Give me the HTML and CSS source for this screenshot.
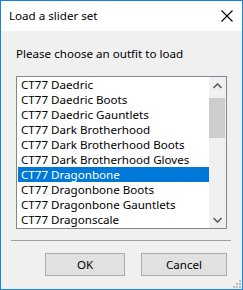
FILE: index.html
```html
<!DOCTYPE html>
<html>
<head>
<meta charset="utf-8">
<link rel="stylesheet" href="styles.css">
</head>
<body>
<div class="window">
  <div class="titlebar">
    <span class="title">Load a slider set</span>
    <svg class="close" width="12" height="12" viewBox="0 0 12 12"><path d="M0.5 0.5 L11.5 11.5 M11.5 0.5 L0.5 11.5" stroke="#000" stroke-width="1.1" fill="none"/></svg>
  </div>
  <div class="content">
    <div class="label">Please choose an outfit to load</div>
    <div class="listbox">
      <ul class="items">
        <li>CT77 Daedric</li>
        <li>CT77 Daedric Boots</li>
        <li>CT77 Daedric Gauntlets</li>
        <li>CT77 Dark Brotherhood</li>
        <li>CT77 Dark Brotherhood Boots</li>
        <li>CT77 Dark Brotherhood Gloves</li>
        <li class="selected">CT77 Dragonbone</li>
        <li>CT77 Dragonbone Boots</li>
        <li>CT77 Dragonbone Gauntlets</li>
        <li>CT77 Dragonscale</li>
      </ul>
      <div class="scrollbar">
        <div class="arrow"><svg width="9" height="6" viewBox="0 0 9 6"><path d="M0.5 5 L4.5 1 L8.5 5" stroke="#606060" stroke-width="1.6" fill="none"/></svg></div>
        <div class="track"><div class="thumb"></div></div>
        <div class="arrow"><svg width="9" height="6" viewBox="0 0 9 6"><path d="M0.5 1 L4.5 5 L8.5 1" stroke="#606060" stroke-width="1.6" fill="none"/></svg></div>
      </div>
    </div>
    <div class="separator"></div>
    <div class="buttons">
      <button class="btn ok">OK</button>
      <button class="btn cancel">Cancel</button>
    </div>
    <div class="grip">
      <i class="d d1"></i><i class="d d2"></i><i class="d d3"></i>
      <i class="d d4"></i><i class="d d5"></i><i class="d d6"></i>
    </div>
  </div>
</div>
</body>
</html>
```
FILE: styles.css
```css
html, body {
  margin: 0;
  padding: 0;
  background: #ffffff;
}
.window {
  width: 243px;
  height: 290px;
  box-sizing: border-box;
  border: 1px solid #1883d7;
  display: flex;
  flex-direction: column;
  font-family: "Noto Sans", "Open Sans", sans-serif;
  font-size: 11.6px;
  color: #000;
}
.titlebar {
  height: 30px;
  background: #fff;
  display: flex;
  align-items: center;
  justify-content: space-between;
  padding: 0 9px 0 8px;
  flex: none;
}
.title {
  font-size: 11.6px;
  line-height: 15px;
  margin-top: -1px;
}
.close {
  display: block;
}
.content {
  flex: 1;
  background: #f0f0f0;
  position: relative;
  display: flex;
  flex-direction: column;
}
.label {
  margin: 15px 0 0 15px;
  line-height: 16px;
  height: 16px;
}
.listbox {
  margin: 14px 0 0 15px;
  width: 211px;
  height: 153px;
  box-sizing: border-box;
  border: 1px solid #828790;
  background: #fff;
  display: flex;
}
.items {
  list-style: none;
  margin: 0;
  padding: 0 0 0 1px;
  flex: 1;
  overflow: hidden;
}
.items li {
  height: 15px;
  line-height: 15px;
  padding-left: 3px;
  white-space: nowrap;
}
.items li.selected {
  background: #0078d7;
  color: #fff;
}
.scrollbar {
  width: 17px;
  background: #f0f0f0;
  display: flex;
  flex-direction: column;
  flex: none;
}
.arrow {
  height: 17px;
  display: flex;
  align-items: center;
  justify-content: center;
  flex: none;
}
.track {
  flex: 1;
  padding-top: 4px;
}
.thumb {
  height: 40px;
  margin: 0 1px 0 0;
  background: #cdcdcd;
}
.separator {
  margin: 11px 0 0 10px;
  width: 220px;
  height: 1px;
  background: #a0a0a0;
}
.buttons {
  display: flex;
  margin: 12px 0 0 44px;
  gap: 16px;
}
.btn {
  height: 23px;
  box-sizing: border-box;
  border: 1px solid #adadad;
  background: #e1e1e1;
  font-family: "Noto Sans", "Open Sans", sans-serif;
  font-size: 11.6px;
  color: #000;
  padding: 0;
  line-height: 19px;
}
.ok {
  width: 80px;
}
.cancel {
  width: 86px;
}
.grip {
  position: absolute;
  right: 1px;
  bottom: 1px;
  width: 10px;
  height: 10px;
}
.d {
  position: absolute;
  width: 2px;
  height: 2px;
  background: #bcbcbc;
}
.d1 { right: 0; bottom: 0; }
.d2 { right: 3px; bottom: 0; }
.d3 { right: 6px; bottom: 0; }
.d4 { right: 0; bottom: 3px; }
.d5 { right: 3px; bottom: 3px; }
.d6 { right: 0; bottom: 6px; }
```
